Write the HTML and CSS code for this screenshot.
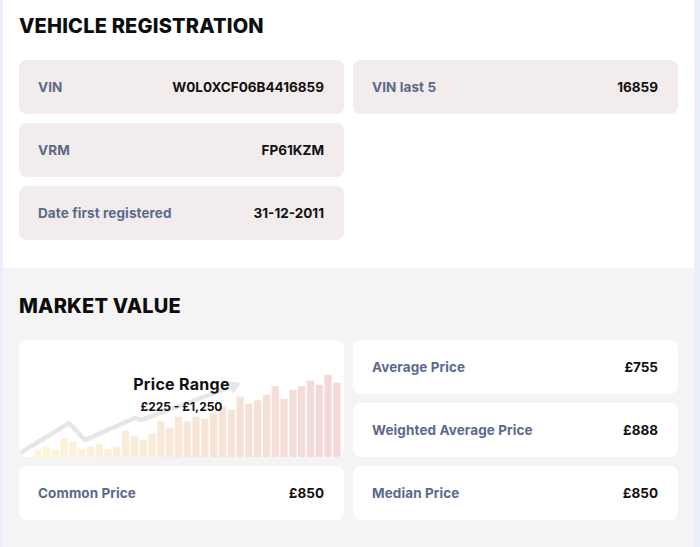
FILE: index.html
```html
<!DOCTYPE html>
<html lang="en">
<head>
<meta charset="utf-8">
<title>Vehicle report</title>
<link rel="stylesheet" href="styles.css">
</head>
<body>
<div class="page">
  <section class="section section-reg">
    <h2 class="section-title">VEHICLE REGISTRATION</h2>
    <div class="reg-grid">
      <div class="stat stat-tint"><span class="stat-label">VIN</span><span class="stat-value">W0L0XCF06B4416859</span></div>
      <div class="stat stat-tint"><span class="stat-label">VIN last 5</span><span class="stat-value">16859</span></div>
      <div class="stat stat-tint"><span class="stat-label">VRM</span><span class="stat-value">FP61KZM</span></div>
      <div class="empty"></div>
      <div class="stat stat-tint"><span class="stat-label">Date first registered</span><span class="stat-value">31-12-2011</span></div>
    </div>
  </section>
  <section class="section section-market">
    <h2 class="section-title">MARKET VALUE</h2>
    <div class="market-grid">
      <div class="range-card">
        <svg class="range-chart" width="325" height="121" viewBox="0 0 325 121" aria-hidden="true">
          <defs>
            <linearGradient id="barFill" gradientUnits="userSpaceOnUse" x1="15" y1="0" x2="323" y2="0">
              <stop offset="0" stop-color="#fef5d6"/>
              <stop offset="0.5" stop-color="#f8e6d6"/>
              <stop offset="1" stop-color="#f2d8d9"/>
            </linearGradient>
          </defs>
          <polyline points="1,117 50,87 66,104 116,82 122,84 212,51" fill="none" stroke="#e6e6e6" stroke-width="4.5" stroke-linejoin="miter"/>
          <polygon points="222,47 214,57.5 208.5,45" fill="#e6e6e6"/>
          <g id="bars" fill="url(#barFill)"></g>
        </svg>
        <div class="range-text">
          <div class="range-title">Price Range</div>
          <div class="range-value">£225 - £1,250</div>
        </div>
      </div>
      <div class="stat stat-white"><span class="stat-label">Average Price</span><span class="stat-value">£755</span></div>
      <div class="stat stat-white"><span class="stat-label">Weighted Average Price</span><span class="stat-value">£888</span></div>
      <div class="stat stat-white"><span class="stat-label">Common Price</span><span class="stat-value">£850</span></div>
      <div class="stat stat-white"><span class="stat-label">Median Price</span><span class="stat-value">£850</span></div>
    </div>
  </section>
</div>
<script src="script.js"></script>
</body>
</html>
```
FILE: styles.css
```css
* { box-sizing: border-box; }
html, body { margin: 0; padding: 0; }
body {
  background: #e9effb;
  font-family: Inter, "Noto Sans", "Liberation Sans", sans-serif;
  color: #111;
  height: 547px;
  overflow: hidden;
}
.page {
  margin: 0 6px 0 3px;
  height: 547px;
  display: flex;
  flex-direction: column;
}
.section { padding: 0 16px; }
.section-reg {
  background: #ffffff;
  padding-top: 14px;
  height: 268px;
}
.section-market {
  background: #f4f4f4;
  padding-top: 26px;
  flex: 1;
}
.section-title {
  margin: 0 0 22px;
  font-size: 20px;
  line-height: 24px;
  font-weight: 800;
  letter-spacing: 0.2px;
  color: #0d0d0d;
}
.reg-grid, .market-grid {
  display: grid;
  grid-template-columns: 325px 325px;
  column-gap: 9px;
  row-gap: 9px;
  grid-auto-rows: 54px;
}
.stat {
  border-radius: 8px;
  display: flex;
  align-items: center;
  justify-content: space-between;
  padding: 0 20px 0 19px;
}
.stat-tint { background: #f2ecec; }
.stat-white { background: #ffffff; }
.stat-label {
  font-size: 13.5px;
  font-weight: 700;
  color: #5b6a8b;
  letter-spacing: 0.1px;
}
.stat-value {
  font-size: 13.5px;
  font-weight: 700;
  color: #111;
}
.range-card {
  grid-row: span 2;
  background: #ffffff;
  border-radius: 8px;
  position: relative;
  overflow: hidden;
}
.range-chart {
  position: absolute;
  left: 0;
  bottom: 0;
}
.range-text {
  position: relative;
  display: flex;
  flex-direction: column;
  align-items: center;
  padding-top: 34px;
}
.range-title {
  font-size: 16px;
  font-weight: 700;
  line-height: 20px;
  letter-spacing: 0.3px;
  color: #111;
}
.range-value {
  margin-top: 5px;
  font-size: 12px;
  font-weight: 700;
  line-height: 15px;
  color: #111;
}
```
FILE: script.js
```js
(function () {
  var heights = [4, 7.3, 4.3, 15.7, 12.3, 5, 7.3, 10, 5, 7.3, 23.3, 17.7, 14.3, 20.3, 32.7, 26.3, 37.3, 32.7, 37.3, 35.3, 40.7, 47.3, 44.3, 57.3, 50.3, 53.7, 59.3, 68, 55.3, 64.3, 68, 73.3, 69.3, 79.3, 71.3];
  var g = document.getElementById('bars');
  var ns = 'http://www.w3.org/2000/svg';
  var bottom = 118;
  heights.forEach(function (h, i) {
    var r = document.createElementNS(ns, 'rect');
    r.setAttribute('x', (15 + i * 8.8).toFixed(2));
    r.setAttribute('y', (bottom - h).toFixed(2));
    r.setAttribute('width', '7.3');
    r.setAttribute('height', (h + 3).toFixed(2));
    g.appendChild(r);
  });
})();
```
